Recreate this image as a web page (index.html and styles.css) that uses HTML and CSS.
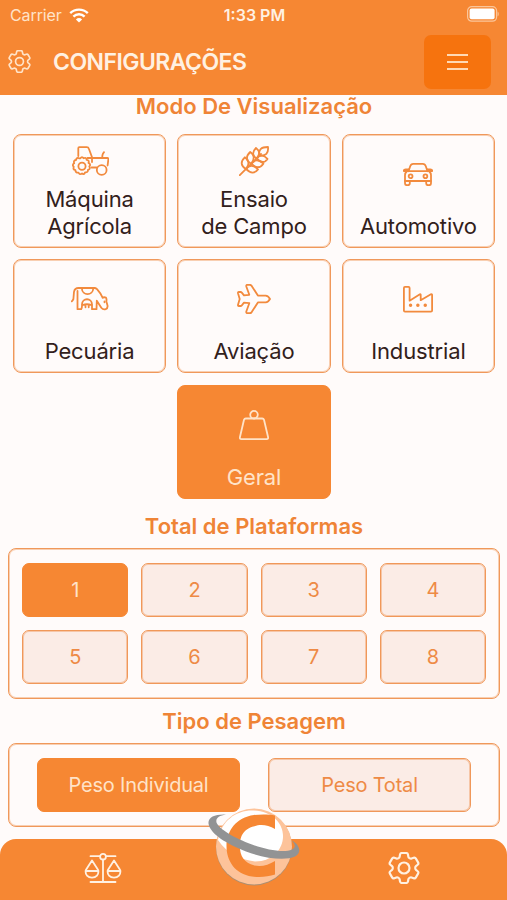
FILE: index.html
```
<!DOCTYPE html>
<html lang="pt-BR">
<head>
    <meta charset="UTF-8">
    <meta name="viewport" content="width=device-width, initial-scale=1.0">
    <title>Configurações</title>
    <link rel="stylesheet" href="styles.css">
</head>
<body>

<svg class="defs" width="0" height="0">
    <symbol id="gear" viewBox="2.4 2.4 19.2 19.2">
        <path d="M9.594 3.94c.09-.542.56-.94 1.11-.94h2.593c.55 0 1.02.398 1.11.94l.213 1.281c.063.374.313.686.645.87.074.04.147.083.22.127.325.196.72.257 1.075.124l1.217-.456a1.125 1.125 0 0 1 1.37.49l1.296 2.247a1.125 1.125 0 0 1-.26 1.431l-1.003.827c-.293.241-.438.613-.43.992a7.723 7.723 0 0 1 0 .255c-.008.378.137.75.43.991l1.004.827c.424.35.534.955.26 1.43l-1.298 2.247a1.125 1.125 0 0 1-1.369.491l-1.217-.456c-.355-.133-.75-.072-1.076.124a6.47 6.47 0 0 1-.22.128c-.331.183-.581.495-.644.869l-.213 1.281c-.09.543-.56.94-1.11.94h-2.594c-.55 0-1.019-.398-1.11-.94l-.213-1.281c-.062-.374-.312-.686-.644-.87a6.52 6.52 0 0 1-.22-.127c-.325-.196-.72-.257-1.076-.124l-1.217.456a1.125 1.125 0 0 1-1.369-.49l-1.297-2.247a1.125 1.125 0 0 1 .26-1.431l1.004-.827c.292-.24.437-.613.43-.991a6.932 6.932 0 0 1 0-.255c.007-.38-.138-.751-.43-.992l-1.004-.827a1.125 1.125 0 0 1-.26-1.43l1.297-2.247a1.125 1.125 0 0 1 1.37-.491l1.216.456c.356.133.751.072 1.076-.124.072-.044.146-.086.22-.128.332-.183.582-.495.644-.869l.214-1.28Z"/>
        <circle cx="12" cy="12" r="3.3"/>
    </symbol>
</svg>

<header class="header">
    <div class="status">
        <div class="carrier">
            <span>Carrier</span>
            <svg width="20" height="15" viewBox="0 0 20 15">
                <path class="wifi" d="M1.2 5.2a12.6 12.6 0 0 1 17.6 0M4.4 8.6a8 8 0 0 1 11.2 0"/>
                <path class="wifi-dot" d="M6.9 11.4a4.5 4.5 0 0 1 6.2 0L10 14.6z"/>
            </svg>
        </div>
        <div class="clock">1:33 PM</div>
        <div class="battery">
            <svg width="33" height="16" viewBox="0 0 33 16">
                <rect class="battery-case" x="1.6" y=".6" width="29" height="14.6" rx="4.2"/>
                <rect class="battery-fill" x="3.6" y="2.6" width="25" height="10.6" rx="2"/>
                <path class="battery-tip" d="M31.6 5.6c1.5.7 1.5 4 0 4.700z"/>
            </svg>
        </div>
    </div>
    <div class="topbar">
        <svg class="icon icon-gear" width="23" height="23"><use href="#gear"/></svg>
        <h1>CONFIGURAÇÕES</h1>
        <button class="menu-btn" aria-label="Menu">
            <span></span>
            <span></span>
            <span></span>
        </button>
    </div>
</header>

<main class="content">
    <h2 class="first">Modo De Visualização</h2>
    <div class="modes">
        <button class="mode">
            <span class="mode-icon">
                <svg class="icon" width="38" height="30" viewBox="0 0 38 30">
                    <path d="M7.3 10V2.2q0-1 1-1h7.500q1.600 0 2.100 1.500l3.300 9.100M16.500 12h20q1 0 .9 1l-.8 6.500M21 12v4M20.500 21.500h5M31.200 12l.2-2.600q.1-1.500 1.600-3.200"/>
                    <path d="M9.400 12.300q1.600-2.500 3.200 0q2.700-1.300 3 1.500q3 .3 1.900 3.100q2.800 1.600.8 3.600q1.600 2.500-1.300 3.300q0 3-2.900 2.600q-1.100 2.800-3.100 1q-2.300 1.800-3.500-.8q-2.900.5-3.100-2.500q-2.900-.6-1.600-3.200q-2.100-2 .4-3.600q-1.200-2.800 1.800-3.300q.5-2.900 3.400-1.700z"/>
                    <circle cx="11" cy="20.300" r="3.600"/>
                    <circle cx="30.700" cy="24" r="4.900"/>
                </svg>
            </span>
            <span class="mode-label">Máquina<br>Agrícola</span>
        </button>
        <button class="mode">
            <span class="mode-icon">
                <svg class="icon" width="30" height="30" viewBox="0 0 30 30">
                    <path d="M.8 29.200L22 8"/>
                    <path d="M20.500 9.500q-2-8.500 8.500-8.500q1 9.500-8.500 8.500z"/>
                    <path d="M17.500 12.500q-6.500-4.500-.5-10.500q6 4.500.5 10.500z"/>
                    <path d="M12.200 17.800q-8-5-1-11.800q6.500 4.500 1 11.800z"/>
                    <path d="M7 23q-8-5-1.200-11.700q6.700 4.700 1.200 11.700z"/>
                    <path d="M17.800 12.300q5-5.500 10.700.6q-4.500 6.500-10.700-.6z"/>
                    <path d="M12.400 17.700q5-6.500 12 0q-5 7-12 0z"/>
                    <path d="M7 23q5-6.500 12 .4q-5 6.500-12-.4z"/>
                </svg>
            </span>
            <span class="mode-label">Ensaio<br>de Campo</span>
        </button>
        <button class="mode">
            <span class="mode-icon">
                <svg class="icon" width="30" height="23" viewBox="0 0 30 23">
                    <path d="M5.500 8.200L7.200 3.200Q8 .9 10.200.9h9.600q2.200 0 3 2.300l1.700 5M4 8.200h22q2 1.600 2 4V18H2v-5.800q0-2.400 2-4zM5.400 6.300H2.600Q.8 6.300.8 8h3.600M24.600 6.300h2.800q1.800 0 1.800 1.700h-3.600"/>
                    <path d="M2 18v2.200q0 2 2 2h.8q2 0 2-2V18M23.200 18v2.200q0 2 2 2h.8q2 0 2-2V18"/>
                    <circle cx="7.600" cy="13.200" r="1.900"/>
                    <circle cx="22.400" cy="13.200" r="1.900"/>
                </svg>
            </span>
            <span class="mode-label">Automotivo</span>
        </button>
        <button class="mode">
            <span class="mode-icon">
                <svg class="icon" width="38" height="24" viewBox="0 0 38 24">
                    <path d="M6.500 10v12.200h3.700q1-1.500.8-4.700c0-7 10-7 10 0v4.700h4.500l.3-8.500 4.500 7q1.800 2.300 4.400 1.500q2.300-.9 1.800-3.800l-1.200-4.200q.6-2-.3-3.600q-2.300-.8-3.300.2Q29.500 6 26 2.200q-1.200-1.200-2.700-1.200H7.500Q3.700 1 3 4.800L2.400 12Q1.700 13.500.8 14.300M6.500 10V4"/>
                    <path d="M10.800 1.200c.5 8 11 8 11.500 0M11.500 18q4.500-1.500 9 0M14.500 18.300v2M17.700 18.300v2"/>
                    <path d="M33.500 14.500v.8"/>
                </svg>
            </span>
            <span class="mode-label">Pecuária</span>
        </button>
        <button class="mode">
            <span class="mode-icon">
                <svg class="icon" width="34" height="30" viewBox="0 0 34 30">
                    <path d="M12.300 10.800L9.300 2.500Q9 .8 10.500.8h2.200q1.200 0 2 1.100l6.200 9.700h7.700q2.600.2 4.400 3.400q-1.800 3.200-4.400 3.400h-7.700l-6.200 9.700q-.8 1.100-2 1.100h-2.200q-1.500 0-1.200-1.700l3-8.300-5.300-.6-2.200 2.800q-.5.600-1.300.6H1.800q-1 0-.8-1.200L2.700 15 1 9.200Q.8 8 1.800 8h1.700q.8 0 1.300.6L7 11.400z"/>
                </svg>
            </span>
            <span class="mode-label">Aviação</span>
        </button>
        <button class="mode">
            <span class="mode-icon">
                <svg class="icon" width="30" height="27" viewBox="0 0 30 27">
                    <path d="M.9 24.500V2q0-1.100 1.100-1.100h3.500q1.100 0 1.100 1.100v12.700l10.300-6.400q.8-.4.8.4v5.500l10.200-5.900q1.200-.5 1.200.6v15.600q0 1.200-1.200 1.200H2q-1.100 0-1.100-1.200z"/>
                    <path class="windows" d="M7.500 19.200h.1M14.800 19.200h.1M22.200 19.200h.1"/>
                </svg>
            </span>
            <span class="mode-label">Industrial</span>
        </button>
        <button class="mode mode-center active">
            <span class="mode-icon">
                <svg class="icon" width="30" height="30" viewBox="0 0 30 30">
                    <circle cx="15" cy="4.700" r="3.800"/>
                    <path d="M6.800 8.500h16.400q1.400 0 1.800 1.300l4.100 17.500q.3 1.800-1.400 1.800H2.300q-1.700 0-1.400-1.800L5 9.800q.4-1.300 1.800-1.300z"/>
                </svg>
            </span>
            <span class="mode-label">Geral</span>
        </button>
    </div>

    <h2>Total de Plataformas</h2>
    <div class="panel platforms">
        <button class="option active">1</button>
        <button class="option">2</button>
        <button class="option">3</button>
        <button class="option">4</button>
        <button class="option">5</button>
        <button class="option">6</button>
        <button class="option">7</button>
        <button class="option">8</button>
    </div>

    <h2>Tipo de Pesagem</h2>
    <div class="panel weighing">
        <button class="option active">Peso Individual</button>
        <button class="option">Peso Total</button>
    </div>
</main>

<nav class="tabbar">
    <a class="tab">
        <svg class="icon" width="38" height="32" viewBox="0 0 38 32">
            <path d="M6.500 4.200h9.300M22.200 4.200h9.300M19 7.500V30M6.500 30h25"/>
            <circle cx="19" cy="4.700" r="2.900"/>
            <path d="M8 8.500L2 17.800c-3 10.500 15 10.500 12 0zM1.500 19h13M30 8.500l-6 9.300c-3 10.500 15 10.500 12 0zM23.500 19h13"/>
        </svg>
    </a>
    <a class="tab">
        <svg class="icon" width="32" height="32"><use href="#gear"/></svg>
    </a>
    <svg class="logo" width="94" height="80" viewBox="0 0 94 80">
        <circle class="logo-shade" cx="47" cy="40.500" r="38"/>
        <circle class="logo-ball" cx="47" cy="39.500" r="38"/>
        <path class="logo-light" d="M11 33C14 14 29 3.500 45 3.500c19 0 31 12 31 26 0 12-10 25-28 25-15-2-28-8-37-21.500z"/>
        <path class="logo-c" d="M68 8.500v13.600C61 17.500 53 17 47.500 19.200 35 22 33 31 32.800 39c.2 10 4.200 17 14.700 19.500 7 1.500 14-.5 20.500-4.500v13.600C61 70 52 70.800 45 69.500 28 67 19.500 54 19.500 39S29 10.500 47 8c7-.9 15-.8 21 .5z"/>
        <path class="logo-ring" d="M19 7.500C8 7 1 10 1.500 16.500 3 27 20 37 39 44.500 58 51.500 78 54 88 49.500 95 46 93 38 85 33.500c3.500 4.500 4 7 0 9C77 46 60 43 45 37.500 27 31 12 22 9.500 15.500 8.500 11 12 8.500 19 7.500z"/>
    </svg>
</nav>

</body>
</html>
```
FILE: styles.css
```
* {
    box-sizing: border-box;
}
body {
    font-family: Inter, "Liberation Sans", sans-serif;
    background-color: #fffbfa;
    margin: 0;
    height: 900px;
    display: flex;
    flex-direction: column;
    overflow: hidden;
}
h1, h2 {
    margin: 0;
    font-weight: 600;
}
h2 {
    font-size: 22px;
    line-height: 26px;
    text-align: center;
    color: #ef8436;
}
h2.first {
    line-height: 22px;
}
button {
    font-family: inherit;
    padding: 0;
    cursor: pointer;
}
.defs {
    position: absolute;
}
.icon {
    display: block;
    fill: none;
    stroke: currentColor;
    stroke-width: 1.8;
    stroke-linecap: round;
    stroke-linejoin: round;
}

/* Header */
.header {
    height: 95px;
    flex: none;
    background-color: #f68733;
    color: #fff1e2;
}
.status {
    height: 30px;
    padding: 0 8px 0 10px;
    display: grid;
    grid-template-columns: 1fr auto 1fr;
    align-items: center;
    font-size: 16px;
}
.carrier {
    display: flex;
    align-items: center;
    gap: 7px;
    color: #ffe3c8;
    letter-spacing: -0.1px;
}
.clock {
    font-weight: 600;
}
.battery {
    display: flex;
    justify-content: flex-end;
    margin-top: -2px;
}
.wifi {
    fill: none;
    stroke: #fff;
    stroke-width: 2.4;
}
.wifi-dot, .battery-fill {
    fill: #fff;
}
.battery-case {
    fill: none;
    stroke: #fbc69b;
    stroke-width: 1.2;
}
.battery-tip {
    fill: #fbc69b;
}
.topbar {
    height: 63px;
    padding: 0 16px 0 8px;
    display: flex;
    align-items: center;
}
.icon-gear {
    stroke-width: 1.4;
    color: #ffe3c8;
}
.topbar h1 {
    font-size: 23px;
    letter-spacing: -0.55px;
    margin-left: 22px;
}
.menu-btn {
    width: 67px;
    height: 54px;
    margin-left: auto;
    border: none;
    border-radius: 7px;
    background-color: #f6730e;
    display: flex;
    flex-direction: column;
    align-items: center;
    justify-content: center;
    gap: 5px;
}
.menu-btn span {
    width: 21px;
    height: 2px;
    background-color: #ffd9b4;
}

/* Content */
.content {
    flex: 1;
    padding: 0 7px 0 8px;
}
.modes {
    display: grid;
    grid-template-columns: repeat(3, 1fr);
    grid-auto-rows: 114px;
    gap: 11.3px;
    padding: 0 5px;
    margin: 17px 0 14.4px;
}
.mode {
    display: flex;
    flex-direction: column;
    border: 1px solid #f0985a;
    box-shadow: inset 0 0 0 1px rgba(240, 152, 90, 0.45);
    border-radius: 8px;
    background: none;
    padding-bottom: 7px;
    color: #32201b;
}
.mode-center {
    grid-column: 2;
}
.mode-icon {
    flex: 1;
    display: flex;
    align-items: center;
    justify-content: center;
    align-self: center;
    color: #f28a3d;
}
.mode-label {
    align-self: center;
    font-size: 22px;
    line-height: 27px;
    letter-spacing: -0.15px;
}
.mode.active {
    background-color: #f68733;
    border-color: #f68733;
    color: #ffe3c8;
}
.mode.active .mode-icon {
    color: #ffe3c8;
}
.mode.active, .option.active {
    box-shadow: none;
}
.panel {
    border: 1px solid #f0985a;
    box-shadow: inset 0 0 0 1px rgba(240, 152, 90, 0.45);
    border-radius: 8px;
    display: grid;
}
.platforms {
    grid-template-columns: repeat(4, 1fr);
    gap: 13px;
    padding: 14px 13px;
    margin: 9px 0;
}
.weighing {
    grid-template-columns: repeat(2, 1fr);
    gap: 28px;
    padding: 14px 28px;
    margin-top: 9px;
}
.option {
    height: 54px;
    border: 1px solid #f0985a;
    box-shadow: inset 0 0 0 1px rgba(240, 152, 90, 0.45);
    border-radius: 7px;
    background-color: #fbece6;
    color: #ee8a45;
    font-size: 20px;
    letter-spacing: -0.2px;
}
.option.active {
    background-color: #f68733;
    border-color: #f68733;
    color: #ffe3c8;
}

/* Bottom navigation */
.tabbar {
    position: relative;
    height: 61px;
    flex: none;
    border-radius: 16px 16px 0 0;
    background-color: #f68733;
    color: #fff1e2;
    display: flex;
    justify-content: space-between;
    align-items: center;
    padding: 0 87px 4px 84px;
}
.tab:nth-child(2) .icon {
    stroke-width: 1.3;
}
.logo {
    position: absolute;
    left: 207px;
    top: -32px;
}
.logo-shade {
    fill: #aa8e72;
}
.logo-ball {
    fill: #fdc39a;
}
.logo-light {
    fill: #fff;
}
.logo-c {
    fill: #f68733;
}
.logo-ring {
    fill: #929394;
}
.windows {
    stroke-width: 3.4;
}
```
